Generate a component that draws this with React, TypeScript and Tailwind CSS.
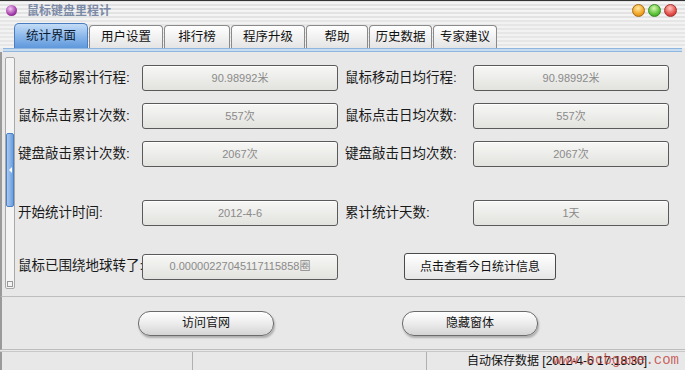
// Mouse & keyboard odometer window - stats tab

const font = "font-['Liberation_Sans','Noto_Sans_CJK_SC',sans-serif]";

const tabs = ['统计界面', '用户设置', '排行榜', '程序升级', '帮助', '历史数据', '专家建议'];
const tabWidths = ['w-[74px]', 'w-[74px]', 'w-[66px]', 'w-[74px]', 'w-[62px]', 'w-[63px]', 'w-[64px]'];

const rows = [
  { left: '鼠标移动累计行程:', lv: '90.98992米', right: '鼠标移动日均行程:', rv: '90.98992米' },
  { left: '鼠标点击累计次数:', lv: '557次', right: '鼠标点击日均次数:', rv: '557次' },
  { left: '键盘敲击累计次数:', lv: '2067次', right: '键盘敲击日均次数:', rv: '2067次' },
];

function ValueBox({ value }: { value: string }) {
  return (
    <div className="relative z-10 flex h-[26px] w-[196px] shrink-0 items-center justify-center rounded-[3px] border border-[#5a5a5a] bg-gradient-to-b from-[#f7f7f5] to-[#e2e2df] text-[11px] text-[#8a8a8a] shadow-[inset_0_1px_0_#ffffff]">
      {value}
    </div>
  );
}

function Label({ text, wide }: { text: string; wide?: boolean }) {
  return (
    <div className={`${wide ? 'w-[128px]' : 'w-[124px]'} shrink-0 whitespace-nowrap text-[13.5px] text-[#1a1a1a]`}>
      {text}
    </div>
  );
}

function PillButton({ text }: { text: string }) {
  return (
    <button className="flex h-[25px] w-[136px] items-center justify-center rounded-[12px] border border-[#6b6b6b] bg-gradient-to-b from-[#ffffff] via-[#ececec] to-[#d4d4d4] text-[12px] text-[#111] shadow-[1px_2px_2px_rgba(0,0,0,0.25)]">
      {text}
    </button>
  );
}

export default function App() {
  return (
    <div className={`${font} flex h-[370px] w-[685px] flex-col overflow-hidden border-t border-[#333] bg-[#e8e8e8]`}>
      {/* Title bar */}
      <div className="flex h-[19px] shrink-0 items-center bg-[repeating-linear-gradient(0deg,#f4f4f4_0px,#f4f4f4_2px,#e3e3e3_2px,#e3e3e3_4px)] pl-[6px] pr-[8px]">
        <div className="h-[11px] w-[11px] rounded-full bg-[radial-gradient(circle_at_40%_35%,#f4c8f4,#a23aa8_60%,#5c1060)]" />
        <div className="ml-[10px] text-[12px] font-bold text-[#7b8aa6]">鼠标键盘里程计</div>
        <div className="ml-auto flex gap-[3px]">
          <div className="h-[13px] w-[13px] rounded-full border border-[#a86a10] bg-[radial-gradient(circle_at_45%_30%,#ffe9a0,#f2a424_60%,#c87a10)]" />
          <div className="h-[13px] w-[13px] rounded-full border border-[#3a8a20] bg-[radial-gradient(circle_at_45%_30%,#d8f8b0,#5cc23a_60%,#2e8a18)]" />
          <div className="h-[13px] w-[13px] rounded-full border border-[#a83030] bg-[radial-gradient(circle_at_45%_30%,#ffc8c0,#e4504a_60%,#a82424)]" />
        </div>
      </div>

      {/* Tab strip */}
      <div className="flex h-[28px] shrink-0 items-end bg-[repeating-linear-gradient(0deg,#f2f2f2_0px,#f2f2f2_2px,#e6e6e6_2px,#e6e6e6_4px)] pl-[14px]">
        {tabs.map((t, i) =>
          i === 0 ? (
            <div
              key={t}
              className={`${tabWidths[i]} flex h-[25px] items-center justify-center rounded-t-[5px] border border-b-0 border-[#4a7cc0] bg-gradient-to-b from-[#c4dcf6] via-[#8cb8ea] to-[#5f98dc] text-[12.5px] text-[#0b1a33]`}
            >
              {t}
            </div>
          ) : (
            <div
              key={t}
              className={`${tabWidths[i]} ml-[1px] flex h-[23px] items-center justify-center rounded-t-[4px] border border-b-0 border-[#8a8a8a] bg-gradient-to-b from-[#ffffff] to-[#e4e4e4] text-[12.5px] text-[#111]`}
            >
              {t}
            </div>
          ),
        )}
      </div>
      <div className="mx-[3px] h-[4px] shrink-0 border-y border-[#8fb6de] bg-[#c9ddf0]" />

      {/* Content */}
      <div className="flex h-[244px] shrink-0 border-l-2 border-[#9a9a9a] pl-[3px]">
        {/* Scrollbar */}
        <div className="mt-[5px] flex h-[232px] w-[10px] flex-col rounded-[2px] border border-[#a8a8a8] bg-[#f4f4f4]">
          <div className="mt-[75px] flex h-[74px] w-[8px] items-center justify-center rounded-[2px] border border-[#4c7fc4] bg-gradient-to-r from-[#a9c9ee] to-[#6a9ede]">
            <div className="h-0 w-0 border-y-[3px] border-r-[3px] border-y-transparent border-r-white" />
          </div>
          <div className="mt-auto mb-[1px] ml-[1px] h-[6px] w-[6px] border border-[#999]" />
        </div>

        <div className="ml-[3px] flex flex-col pt-[13px]">
          {rows.map((r, i) => (
            <div key={i} className={`flex items-center ${i > 0 ? 'mt-[12px]' : ''}`}>
              <Label text={r.left} />
              <ValueBox value={r.lv} />
              <div className="w-[7px]" />
              <Label text={r.right} wide />
              <ValueBox value={r.rv} />
            </div>
          ))}

          <div className="mt-[33px] flex items-center">
            <Label text="开始统计时间:" />
            <ValueBox value="2012-4-6" />
            <div className="w-[7px]" />
            <Label text="累计统计天数:" wide />
            <ValueBox value="1天" />
          </div>

          <div className="mt-[27px] flex items-center">
            <Label text="鼠标已围绕地球转了:" />
            <ValueBox value="0.00000227045117115858圈" />
            <div className="w-[66px]" />
            <button className="flex h-[27px] w-[152px] items-center justify-center rounded-[3px] border border-[#4a4a4a] bg-gradient-to-b from-[#ffffff] to-[#e6e6e6] text-[12px] text-[#111]">
              点击查看今日统计信息
            </button>
          </div>
        </div>
      </div>

      {/* Bottom buttons */}
      <div className="flex h-[54px] shrink-0 items-center border-y border-l-2 border-y-[#bdbdbd] border-l-[#9a9a9a] pl-[136px]">
        <PillButton text="访问官网" />
        <div className="w-[128px]" />
        <PillButton text="隐藏窗体" />
      </div>

      {/* Status bar */}
      <div className="relative mt-[1px] flex flex-1 border-t border-[#c8c8c8] text-[12px] text-[#111]">
        <div className="w-[193px] border-r border-l-2 border-r-[#b0b0b0] border-l-[#9a9a9a]" />
        <div className="w-[234px] border-r border-[#b0b0b0]" />
        <div className="flex flex-1 items-center pl-[40px]">自动保存数据 [2012-4-6 17:18:30]</div>
        <div className="absolute right-[6px] top-[0px] font-['Liberation_Mono',monospace] text-[14px] leading-[17px] text-[#c0403a]/80">
          www.bcbgame.com
        </div>
      </div>
    </div>
  );
}
